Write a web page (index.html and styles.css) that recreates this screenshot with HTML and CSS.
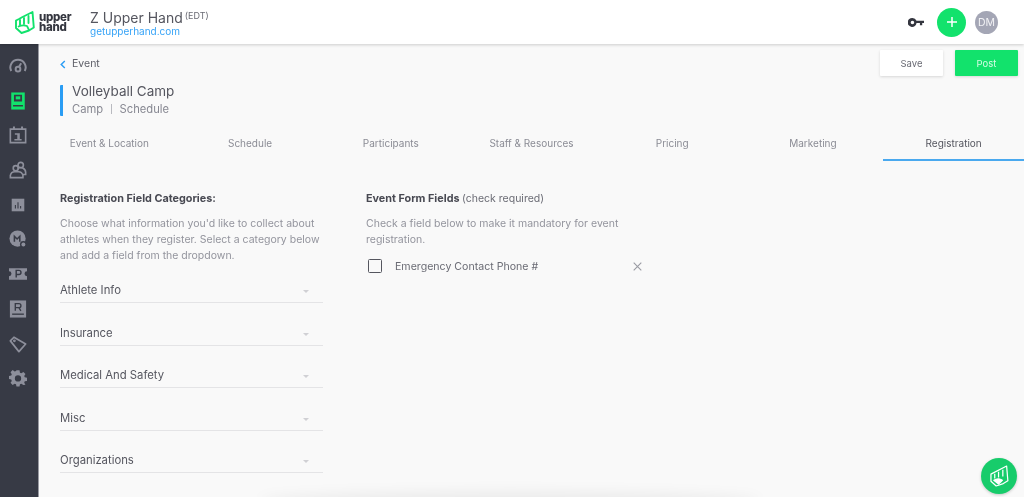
FILE: index.html
```html
<!DOCTYPE html>
<html lang="en">
<head>
<meta charset="utf-8">
<title>Volleyball Camp</title>
<link rel="stylesheet" href="styles.css">
</head>
<body>
<div class="app">
  <header class="topbar">
    <div class="logo">
      <svg class="logo-mark" viewBox="0 0 20 23" width="20" height="23" fill="none" stroke="#12e26c" stroke-width="1.900" stroke-linejoin="round" stroke-linecap="round">
        <path d="M1 9.500 L4 8 L7.500 6 L11.500 4 L17.500 1 L18.800 16.500 L14 19.500 L6.500 22 L1 17 Z"/>
        <path d="M5 9v5M9 7v6M13.500 5v7"/>
        <path d="M3.500 15.500 Q8 13.500 12 15 L14 19" stroke-width="1.700"/>
      </svg>
      <div class="logo-word"><span>upper</span><span>hand</span></div>
    </div>
    <div class="org">
      <div class="org-name">Z Upper Hand<sup class="org-tz">(EDT)</sup></div>
      <div class="org-link">getupperhand.com</div>
    </div>
    <div class="top-actions">
      <svg class="key" viewBox="0 0 18 10" width="16" height="9"><path fill="#34363f" d="M5 0a5 5 0 0 1 4.600 3H18v2.600h-2V8h-2.600V5.600H9.600A5 5 0 1 1 5 0zm0 3a2 2 0 1 0 0 4 2 2 0 0 0 0-4z"/></svg>
      <div class="add"><svg viewBox="0 0 12 12" width="12" height="12"><path d="M6 1v10M1 6h10" stroke="#fff" stroke-width="1.500"/></svg></div>
      <div class="avatar">DM</div>
    </div>
  </header>
  <div class="body">
    <nav class="side">
      <svg class="ico" viewBox="0 0 20 20" fill="none" stroke="#8d8f9b" stroke-width="2.200"><path d="M2.500 15.500A8.500 8.500 0 1 1 17.500 15.500"/><path d="M11 11l2.500-4"/><circle cx="10" cy="13.500" r="2.600"/></svg>
      <svg class="ico" viewBox="0 0 20 20"><path fill="#12e26c" d="M2.500 .5h15v19h-15z"/><path fill="#373a45" d="M5.500 3h9v7.500h-9zM4.500 14.500h11V16h-11z"/><path fill="#12e26c" d="M7.500 4.800h5v3.400h-5z"/></svg>
      <svg class="ico" viewBox="0 0 20 20" fill="none" stroke="#8d8f9b" stroke-width="1.800"><path d="M1.500 3.500h17v15h-17z"/><path d="M5.500 .5v3M14.500 .5v3" stroke-width="2.200"/><path d="M6.500 8h5.500v6.500h2v1.500H6v-1.500h3.200V9.800H6.500z" fill="#8d8f9b" stroke="none"/></svg>
      <svg class="ico" viewBox="0 0 20 20" fill="none" stroke="#8d8f9b" stroke-width="1.800"><circle cx="13" cy="4.500" r="3"/><path d="M9.500 8.500A5.500 5.500 0 0 1 18.500 12.500v2.500h-3"/><circle cx="7.500" cy="8" r="2.800"/><path d="M1.500 18.500v-2.500a5 5 0 0 1 5-4h3a5.500 5.500 0 0 1 6 4v2.500z"/></svg>
      <svg class="ico" viewBox="0 0 20 20"><path fill="#8d8f9b" d="M3 3h14v14H3z"/><path fill="#373a45" d="M6.500 10h1.200v4H6.500zM9.400 7h1.200v7H9.400zM12.300 11h1.200v3h-1.200z"/></svg>
      <svg class="ico" viewBox="0 0 20 20"><circle cx="9.500" cy="9.500" r="9" fill="#8d8f9b"/><circle cx="16" cy="16" r="3.800" fill="#373a45"/><circle cx="16" cy="16" r="2.200" fill="#8d8f9b"/><path d="M6 13V7l3 3 3-3v6" fill="none" stroke="#373a45" stroke-width="1.700"/></svg>
      <svg class="ico" viewBox="0 0 20 20"><path fill="#8d8f9b" d="M0 3.500h20v3.500a2.500 2.500 0 0 0 0 5.500v4H0v-4a2.500 2.500 0 0 0 0-5.500z"/><path d="M8 14V6h3a2.300 2.300 0 0 1 0 4.600H8" fill="none" stroke="#373a45" stroke-width="1.600"/></svg>
      <svg class="ico" viewBox="0 0 20 20"><path fill="#8d8f9b" d="M1 .5h18v19H1z"/><path fill="none" stroke="#373a45" stroke-width="1.500" d="M7 12V4h4a2.200 2.200 0 0 1 0 4.500H7M11 8.500l2.200 3.500"/><path fill="#373a45" d="M3.500 15h13v1.500h-13z"/></svg>
      <svg class="ico" viewBox="0 0 20 20" fill="none" stroke="#8d8f9b" stroke-width="1.900"><path d="M1.500 6.500L5.500 2.500 18.500 10 11 18.500z" stroke-linejoin="round"/><circle cx="6" cy="6.500" r=".6" fill="#8d8f9b"/></svg>
      <svg class="ico" viewBox="0 0 20 20"><path fill="#8d8f9b" fill-rule="evenodd" d="M8.300 1h3.400l.5 2.600 1.500.6L16 2.700l2.300 2.400-1.400 2.200.6 1.500 2.500.5v3.400l-2.500.5-.6 1.500 1.400 2.200L16 17.300l-2.300-1.500-1.500.6-.5 2.600H8.300l-.5-2.600-1.500-.6L4 17.300l-2.300-2.400 1.400-2.200-.6-1.500L0 10.700V7.300l2.500-.5.6-1.500-1.400-2.200L4 .7l2.300 1.500 1.500-.6zM10 6.500a3.500 3.500 0 1 0 0 7 3.500 3.500 0 0 0 0-7z" transform="translate(0 .5)"/></svg>
    </nav>
    <main class="main">
      <div class="page-head">
        <div class="page-title">
          <div class="crumb"><svg viewBox="0 0 6 10" width="6" height="9" fill="none" stroke="#2a9df4" stroke-width="1.600"><path d="M5 1L1 5l4 4"/></svg><span>Event</span></div>
          <div class="title-block">
            <div class="title">Volleyball Camp</div>
            <div class="subtitle"><span>Camp</span><i class="sep"></i><span>Schedule</span></div>
          </div>
        </div>
        <div class="page-actions">
          <button class="btn btn-save">Save</button>
          <button class="btn btn-post">Post</button>
        </div>
      </div>
      <div class="tabs">
        <div class="tab">Event &amp; Location</div>
        <div class="tab">Schedule</div>
        <div class="tab">Participants</div>
        <div class="tab">Staff &amp; Resources</div>
        <div class="tab">Pricing</div>
        <div class="tab">Marketing</div>
        <div class="tab tab-active">Registration</div>
      </div>
      <div class="panels">
        <section class="col-left">
          <h2 class="heading">Registration Field Categories:</h2>
          <p class="help">Choose what information you'd like to collect about athletes when they register. Select a category below and add a field from the dropdown.</p>
          <div class="select"><span>Athlete Info</span><i class="caret"></i></div>
          <div class="select"><span>Insurance</span><i class="caret"></i></div>
          <div class="select"><span>Medical And Safety</span><i class="caret"></i></div>
          <div class="select"><span>Misc</span><i class="caret"></i></div>
          <div class="select"><span>Organizations</span><i class="caret"></i></div>
        </section>
        <section class="col-right">
          <h2 class="heading">Event Form Fields <span class="light">(check required)</span></h2>
          <p class="help">Check a field below to make it mandatory for event registration.</p>
          <div class="field">
            <i class="check"></i>
            <span class="field-name">Emergency Contact Phone #</span>
            <svg class="remove" viewBox="0 0 9 9" width="9" height="9" fill="none" stroke="#9a9ba3" stroke-width="1.100"><path d="M.7.7l7.600 7.600M8.300.7L.7 8.300"/></svg>
          </div>
        </section>
      </div>
    </main>
  </div>
  <div class="bottom-glow"></div>
  <div class="fab">
    <svg viewBox="0 0 20 23" width="19" height="22" fill="none" stroke="#fff" stroke-width="1.300" stroke-linejoin="round"><path d="M1 9.500L17.500 1l1.300 15.500L14 19.500 6.500 22 1 17z"/><path d="M5 9v5M9 7v6M13.500 5v7"/><path d="M4 16q5-3 9 0l-4 4z" fill="#fff"/></svg>
  </div>
</div>
</body>
</html>
```
FILE: styles.css
```css
* { box-sizing: border-box; }
html, body { margin: 0; height: 100%; overflow: hidden; }
body { font-family: Inter, "Liberation Sans", sans-serif; color: #55565f; background: #f9f9f9; }
.app { position: relative; width: 1024px; height: 497px; overflow: hidden; display: flex; flex-direction: column; filter: blur(.35px); }
.topbar { flex: 0 0 44px; height: 44px; background: #fff; display: flex; align-items: center; padding: 0 26px 0 15px; box-shadow: 0 1px 3px rgba(0,0,0,.18); position: relative; z-index: 2; }
.logo { display: flex; align-items: center; gap: 4px; width: 75px; }
.logo-mark { display: block; flex: none; }
.logo-word { display: flex; flex-direction: column; font-size: 11.500px; line-height: 10px; font-weight: 800; color: #34363f; letter-spacing: -.3px; }
.org { padding-top: 1px; }
.org-name { font-size: 14px; line-height: 17px; color: #55565f; white-space: nowrap; }
.org-tz { font-size: 9px; line-height: 0; vertical-align: 4px; margin-left: 2px; color: #6a6b74; }
.org-link { font-size: 10px; line-height: 10px; color: #36a3f7; }
.top-actions { margin-left: auto; display: flex; align-items: center; }
.key { display: block; margin-right: 13px; }
.add { width: 29px; height: 29px; border-radius: 50%; background: #12e26c; display: flex; align-items: center; justify-content: center; }
.avatar { width: 23px; height: 23px; border-radius: 50%; background: #a4a6b5; color: #f2f2f5; font-size: 10.500px; display: flex; align-items: center; justify-content: center; margin-left: 9px; }
.body { flex: 1; display: flex; min-height: 0; }
.side { flex: 0 0 39px; width: 39px; background: #373a45; display: flex; flex-direction: column; align-items: center; padding: 13px 2px 0 0; gap: 16.700px; border-right: 1px solid #9a9ba3; }
.ico { width: 18px; height: 18px; display: block; flex: none; }
.main { flex: 1; min-width: 0; display: flex; flex-direction: column; }
.page-head { display: flex; justify-content: space-between; padding: 6px 6px 0 21px; height: 89px; flex: none; }
.crumb { display: flex; align-items: center; gap: 6px; font-size: 10.500px; line-height: 14px; color: #5f6069; margin-top: 7px; }
.title-block { margin-top: 14px; border-left: 3px solid #2a9df4; border-radius: 1px; padding-left: 9px; height: 31px; display: flex; flex-direction: column; justify-content: flex-start; }
.title { font-size: 13.500px; line-height: 13px; color: #55565f; }
.subtitle { display: flex; align-items: center; margin-top: 4px; font-size: 11.200px; line-height: 14px; color: #878892; }
.sep { width: 1px; height: 10px; background: #b9bac0; margin: 0 8px 0 7.500px; }
.page-actions { display: flex; gap: 12px; align-items: flex-start; }
.btn { height: 26px; border: 0; border-radius: 1px; font-family: inherit; font-size: 9.500px; width: 63px; padding: 0; box-shadow: 0 1px 3px rgba(0,0,0,.14); }
.btn-save { background: #fff; color: #6b6c75; }
.btn-post { background: #12e26c; color: #d5fbe4; }
.tabs { display: grid; grid-template-columns: repeat(7, 1fr); height: 28px; flex: none; }
.tab { text-align: center; font-size: 10px; line-height: 20px; color: #8b8c95; white-space: nowrap; }
.tab-active { color: #55565f; border-bottom: 2px solid #4aa9ef; }
.panels { display: flex; padding: 31px 0 0 21px; gap: 43px; }
.col-left { width: 263px; flex: none; }
.col-right { width: 280px; flex: none; }
.heading { margin: 0 0 10px; font-size: 10.800px; line-height: 14px; font-weight: 700; color: #484952; }
.light { font-weight: 400; font-size: 10.500px; color: #6a6b74; }
.help { margin: 0; font-size: 10.500px; line-height: 16px; color: #93949d; }
.col-right .help { margin-bottom: 10px; }
.select { height: 39px; display: flex; align-items: flex-end; justify-content: space-between; border-bottom: 1px solid #e4e4e6; font-size: 11.300px; line-height: 14px; color: #55565f; padding: 0 14px 5px 0; }
.select + .select { margin-top: 3.500px; }
.caret { width: 0; height: 0; border: 3px solid transparent; border-top: 3px solid #d0d0d4; border-bottom: 0; margin-bottom: 4px; }
.field { display: flex; align-items: center; height: 16px; font-size: 10.600px; color: #6a6b74; }
.check { width: 14px; height: 14px; border: 1.500px solid #55565f; border-radius: 1.500px; margin-left: 2px; flex: none; }
.field-name { margin-left: 13px; width: 238px; white-space: nowrap; }
.remove { display: block; flex: none; }
.bottom-glow { position: absolute; left: 260px; width: 500px; bottom: -12px; height: 18px; border-radius: 50%; background: rgba(0,0,0,.05); filter: blur(6px); }
.fab { position: absolute; left: 981px; top: 458px; width: 36px; height: 36px; border-radius: 50%; background: #17cc6b; display: flex; align-items: center; justify-content: center; box-shadow: 0 1px 3px rgba(0,0,0,.2); }
```
